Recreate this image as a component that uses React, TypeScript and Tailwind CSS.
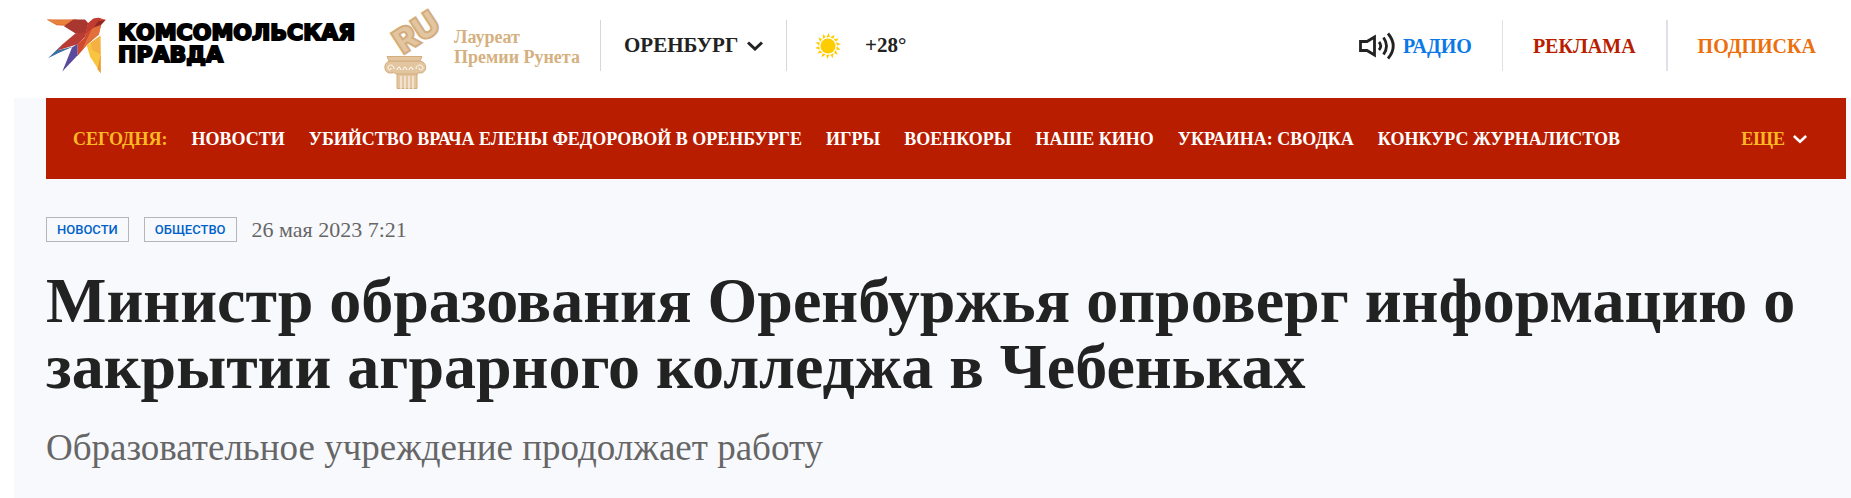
import React from "react";

const topics = [
  "Новости",
  "Убийство врача Елены Федоровой в Оренбурге",
  "Игры",
  "Военкоры",
  "Наше кино",
  "Украина: сводка",
  "Конкурс журналистов",
];

const tags = ["Новости", "Общество"];

const rays = Array.from({ length: 14 }, (_, i) => (i * 360) / 14);

function Bird() {
  return (
    <svg viewBox="48 50 180 170" className="h-[57px] w-[60px] shrink-0" aria-hidden="true">
      <path d="M50 57 L140 57 L146 66 L137 98 L108 76 L80 74 Z" fill="#d9622f" />
      <path d="M50 57 L80 59 L130 58 L108 72 L82 73 Z" fill="#e8823a" />
      <path d="M130 57 L165 57 L175 68 L168 98 L137 99 L102 77 Z" fill="#a9362f" />
      <path d="M96 133 L84 149 L130 138 L84 158 L54 173 Z" fill="#3a6ea5" />
      <path d="M137 98 L170 95 L164 110 L143 131 L82 150 L96 133 Z" fill="#b93c34" />
      <path d="M143 130 L126 141 L97 213 L143 164 Z" fill="#5b4a9b" />
      <path d="M174 68 L190 55 L205 52 L227 58 L214 72 L206 102 L172 132 L143 166 L143 130 L164 112 Z" fill="#d14a2f" />
      <path d="M186 84 L212 74 L207 102 L172 130 L154 152 Z" fill="#e2703a" />
      <path d="M174 68 L190 55 L205 52 L214 55 L192 80 L168 98 Z" fill="#c03c30" />
      <path d="M192 80 L205 62 L227 58 L214 72 Z" fill="#8f2722" />
      <path d="M211 106 L212 218 L180 168 L170 134 Z" fill="#f9c440" />
      <path d="M211 106 L212 162 L186 148 L183 126 Z" fill="#f4b042" />
      <path d="M212 158 L212 218 L203 206 Z" fill="#e99a35" />
    </svg>
  );
}

function Column() {
  return (
    <svg viewBox="0 0 60 82" className="h-[82px] w-[60px] shrink-0 overflow-visible" aria-hidden="true">
      <g fill="#e3c6a0" stroke="#d3ad7d" strokeWidth="1">
        <path d="M13 65 H33 V80.5 H13 Z" />
        <path d="M7 53 C-1 53 -1 65 6 65 C9 65 11 64 12 66 H34 C33 64 35 65 37 65 C44 64 43 53 35 53 Z" />
        <path d="M3 48.5 H38 L36 53 H5 Z" />
      </g>
      <g fill="none" stroke="#fff" strokeWidth="1">
        <path d="M17 68 V81 M21 68 V81 M25 68 V81 M29 68 V81" />
        <path d="M10 61 C10 56 4 56 4 60 C4 62 7 63 7 60" />
        <path d="M32 61 C32 56 39 56 39 60 C39 62 35 63 35 60" />
        <path d="M13 62 Q15 56 17 62 M19 62 Q21 56 23 62 M25 62 Q27 56 29 62" />
      </g>
      <text
        x="19"
        y="47"
        transform="rotate(-33 19 47)"
        fontFamily="Inter, sans-serif"
        fontWeight="900"
        fontSize="34"
        fill="#e3c6a0"
        stroke="#d3ad7d"
        strokeWidth="2"
      >
        RU
      </text>
    </svg>
  );
}

function Sun() {
  return (
    <svg viewBox="-13 -13 26 26" className="size-[26px]" fill="#ffcc00" role="img" aria-label="Ясно">
      <circle r="7.6" />
      {rays.map((a) => (
        <path key={a} d="M-1.8 -8.6 L1.8 -9 L0.8 -13 Z" transform={`rotate(${a})`} />
      ))}
    </svg>
  );
}

function Chevron({ className }: { className: string }) {
  return (
    <svg viewBox="0 0 16 10" className={className} fill="none" stroke="currentColor" strokeWidth="3" aria-hidden="true">
      <path d="M1 1.5 L8 8 L15 1.5" />
    </svg>
  );
}

function Speaker() {
  return (
    <svg viewBox="0 0 36 28" className="h-7 w-9" fill="none" stroke="#222" strokeWidth="2.8" aria-hidden="true">
      <path d="M1.5 9.5 H8 L15.5 5 V23 L8 18.5 H1.5 Z" />
      <path d="M20 10 Q23.5 14 20 18" />
      <path d="M24.5 5.5 Q30.5 14 24.5 22.5" />
      <path d="M29 1.5 Q39.5 14 29 26.5" />
    </svg>
  );
}

function Header() {
  return (
    <header className="flex h-[98px] items-start bg-white pr-[35px] pl-[46px]">
      <a href="#" className="mt-[17px] flex gap-3 text-black" aria-label="Комсомольская правда">
        <Bird />
        <span className="mt-[5px] w-[237px] font-['DejaVu_Sans',sans-serif] text-[22px]/[22px] font-bold whitespace-nowrap uppercase [-webkit-text-stroke:2px_#000]">
          Комсомольская
          <br />
          правда
        </span>
      </a>
      <a href="#" className="mt-2 ml-[29px] flex w-[198px] gap-2.5 text-lg/5 font-bold text-[#d5b080]">
        <Column />
        <span className="mt-[19px] whitespace-nowrap">
          Лауреат
          <br />
          Премии Рунета
        </span>
      </a>
      <div className="mt-5 ml-[18px] flex h-[51px] items-center border-x border-[#d3d8dd] px-[23px] text-[21px] font-bold">
        <label className="relative flex items-center">
          <select aria-label="Город" className="w-[139px] appearance-none bg-transparent uppercase outline-none">
            <option>Оренбург</option>
          </select>
          <Chevron className="pointer-events-none absolute right-0 h-2.5 w-4" />
        </label>
      </div>
      <div className="mt-5 ml-7 flex h-[51px] items-center gap-6 text-[21px] font-bold">
        <Sun />
        <span>+28°</span>
      </div>
      <nav className="mt-5 ml-auto flex h-[51px] items-center gap-[30px] text-xl font-bold uppercase">
        <a href="#" className="flex items-center gap-2 text-[#0a78e6]">
          <Speaker />
          Радио
        </a>
        <span className="h-full w-px bg-[#dee2e6]" />
        <a href="#" className="text-[#b81d00]">Реклама</a>
        <span className="h-full w-0.5 bg-[#dee2e6]" />
        <a href="#" className="text-[#ec6f0c]">Подписка</a>
      </nav>
    </header>
  );
}

function TopicsBar() {
  return (
    <nav className="mr-[5px] ml-8 flex h-[81px] items-center gap-6 bg-[#b81d00] pr-[39px] pl-[27px] text-lg font-bold whitespace-nowrap text-white uppercase">
      <span className="text-[#fdb924]">Сегодня:</span>
      {topics.map((t) => (
        <a key={t} href="#">{t}</a>
      ))}
      <button className="ml-auto flex items-center gap-2 text-[#fdb924] uppercase">
        Еще
        <Chevron className="h-2.5 w-3.5 text-white" />
      </button>
    </nav>
  );
}

export default function App() {
  return (
    <div className="min-h-screen bg-white font-['Liberation_Serif',serif] text-[#222]">
      <Header />
      <main className="ml-3.5 min-h-[400px] bg-[#f8f9fd]">
        <TopicsBar />
        <article className="px-8">
          <div className="mt-[38px] flex h-[25px] items-center">
            {tags.map((t) => (
              <a
                key={t}
                href="#"
                className="mr-[15px] flex h-[25px] items-center border border-[#b4b6ba] px-2.5 font-[Roboto,sans-serif] text-[13px] font-medium text-[#0062c8] uppercase"
              >
                {t}
              </a>
            ))}
            <time dateTime="2023-05-26T07:21" className="text-[22px] text-[#666]">26 мая 2023 7:21</time>
          </div>
          <h1 className="mt-[26px] text-[64px]/[66px] font-bold">
            Министр образования Оренбуржья опроверг информацию о закрытии аграрного колледжа в Чебеньках
          </h1>
          <p className="mt-6 text-[37px]/[48px] text-[#666]">Образовательное учреждение продолжает работу</p>
        </article>
      </main>
    </div>
  );
}
